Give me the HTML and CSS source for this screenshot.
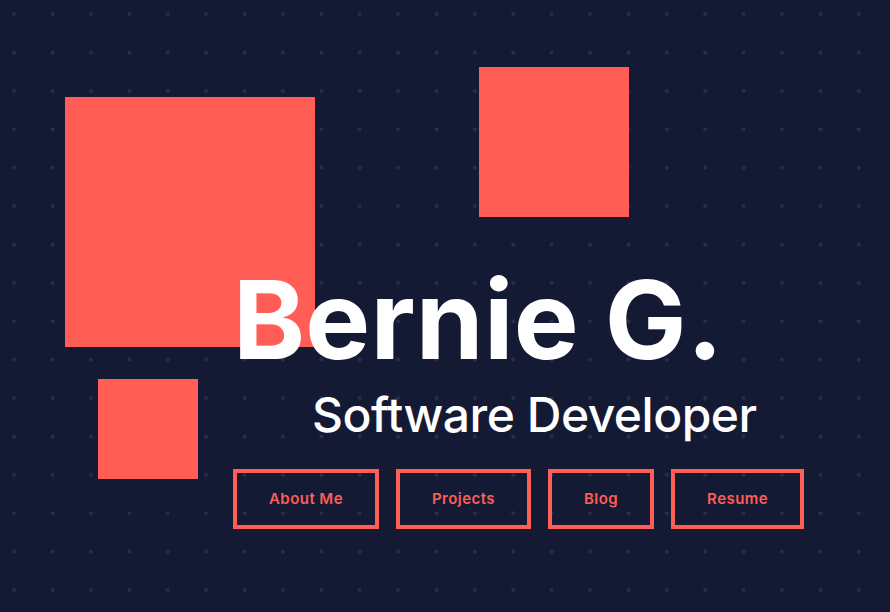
FILE: index.html
```html
<!DOCTYPE html>
<html lang="en">
<head>
<meta charset="utf-8">
<title>Bernie G.</title>
<link rel="stylesheet" href="styles.css">
</head>
<body>
<main class="stage">
  <div class="shape shape-large"></div>
  <div class="shape shape-top"></div>
  <div class="shape shape-small"></div>
  <section class="hero">
    <h1 class="name">Bernie G.</h1>
    <h2 class="role">Software Developer</h2>
    <nav class="links">
      <a class="btn" href="#about">About Me</a>
      <a class="btn" href="#projects">Projects</a>
      <a class="btn" href="#blog">Blog</a>
      <a class="btn" href="#resume">Resume</a>
    </nav>
  </section>
</main>
</body>
</html>
```
FILE: styles.css
```css
html, body {
  margin: 0;
  padding: 0;
}
body {
  background-color: #151a34;
  background-image: radial-gradient(circle, #282e4b 1.7px, transparent 2.3px);
  background-size: 38.4px 38.4px;
  background-position: -5px -5px;
  font-family: Inter, "Noto Sans", "DejaVu Sans", sans-serif;
  color: #fff;
  width: 890px;
  height: 612px;
  overflow: hidden;
}
.stage {
  position: relative;
  width: 890px;
  height: 612px;
}
.shape {
  position: absolute;
  background: #ff5d56;
}
.shape-large {
  left: 65px;
  top: 97px;
  width: 250px;
  height: 250px;
}
.shape-top {
  left: 479px;
  top: 67px;
  width: 150px;
  height: 150px;
}
.shape-small {
  left: 98px;
  top: 379px;
  width: 100px;
  height: 100px;
}
.hero {
  position: relative;
  display: flex;
  flex-direction: column;
  align-items: flex-start;
  padding: 265px 0 0 233px;
}
.name {
  margin: 0;
  font-size: 109px;
  line-height: 1;
  font-weight: 700;
  letter-spacing: 0.2px;
}
.role {
  margin: 17px 0 0 79px;
  font-size: 48px;
  line-height: 1;
  font-weight: 500;
  letter-spacing: -0.5px;
}
.links {
  display: flex;
  gap: 17px;
  margin: 30px 0 0 0;
}
.btn {
  display: block;
  border: 4px solid #ff5d56;
  padding: 16px 32px;
  line-height: 20px;
  font-size: 15px;
  font-weight: 600;
  letter-spacing: 0.45px;
  color: #ff5d56;
  text-decoration: none;
}
```
